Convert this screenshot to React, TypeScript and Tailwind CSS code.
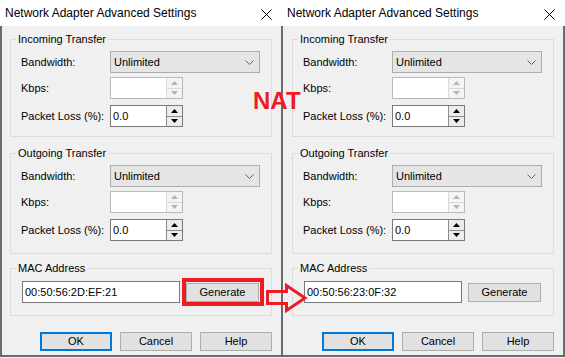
import React from 'react';

const red = '#ed1c24';

function CloseIcon() {
  return (
    <svg width="11" height="11" viewBox="0 0 11 11" className="mt-[2px]">
      <path d="M0.5 0.5 L10.5 10.5 M10.5 0.5 L0.5 10.5" stroke="#000" strokeWidth="1" fill="none" />
    </svg>
  );
}

function Chevron() {
  return (
    <svg width="9" height="5" viewBox="0 0 9 5">
      <polyline points="0.5,0.5 4.5,4.5 8.5,0.5" stroke="#606060" strokeWidth="1" fill="none" />
    </svg>
  );
}

function Triangle({ up, disabled }: { up: boolean; disabled: boolean }) {
  return (
    <svg width="7" height="4" viewBox="0 0 7 4">
      <polygon points={up ? '0,4 3.5,0 7,4' : '0,0 3.5,4 7,0'} fill={disabled ? '#b4b4b4' : '#000'} />
    </svg>
  );
}

function ComboBox() {
  return (
    <div className="flex h-[22px] w-[150px] items-center justify-between border border-[#adadad] bg-[#e5e5e5] pl-[3px] pr-[5px]">
      <span>Unlimited</span>
      <Chevron />
    </div>
  );
}

function SpinBox({ value, disabled }: { value: string; disabled?: boolean }) {
  return (
    <div
      className={`flex h-[22px] w-[73px] bg-white ${disabled ? 'border border-[#b9b9b9]' : 'border border-[#7a7a7a]'}`}
    >
      <div className="flex flex-1 items-center pl-[2px]">{value}</div>
      <div
        className={`flex w-[16px] flex-col border-l ${disabled ? 'border-[#d9d9d9] bg-[#f4f4f4]' : 'border-[#8c8c8c] bg-[#ececec]'}`}
      >
        <div className="flex flex-1 items-center justify-center">
          <Triangle up disabled={!!disabled} />
        </div>
        <div
          className={`flex flex-1 items-center justify-center border-t ${disabled ? 'border-[#d9d9d9]' : 'border-[#8c8c8c]'}`}
        >
          <Triangle up={false} disabled={!!disabled} />
        </div>
      </div>
    </div>
  );
}

function Row({ label, children, className = '' }: { label: string; children: React.ReactNode; className?: string }) {
  return (
    <div className={`flex items-center ${className}`}>
      <span className="w-[89px] shrink-0">{label}</span>
      {children}
    </div>
  );
}

function TransferGroup({ title, className }: { title: string; className: string }) {
  return (
    <fieldset className={`border border-[#dcdcdc] px-[5px] ${className}`}>
      <legend className="px-[2px] leading-[16px]">{title}</legend>
      <div className="flex flex-col pl-[5px] pt-[4px]">
        <Row label="Bandwidth:">
          <ComboBox />
        </Row>
        <Row label="Kbps:" className="mt-[4px]">
          <SpinBox value="" disabled />
        </Row>
        <Row label="Packet Loss (%):" className="mt-[6px]">
          <SpinBox value="0.0" />
        </Row>
      </div>
    </fieldset>
  );
}

function Button({ label, primary }: { label: string; primary?: boolean }) {
  return (
    <div
      className={`flex h-[19px] w-[73px] items-center justify-center bg-[#e1e1e1] ${primary ? 'border-2 border-[#0078d7]' : 'border border-[#adadad]'}`}
    >
      {label}
    </div>
  );
}

function Dialog({ mac, side }: { mac: string; side: 'left' | 'right' }) {
  const body =
    side === 'left'
      ? 'border-l-2 border-r border-b-2 pl-[8px] pr-[9px]'
      : 'border-l border-r-2 border-b-2 pl-[9px] pr-[9px]';
  return (
    <div className={`flex h-[357px] flex-col ${side === 'left' ? 'w-[282px]' : 'w-[283px]'}`}>
      <div className="flex h-[26px] shrink-0 items-center justify-between bg-white pl-[5px] pr-[10px] text-[12px]">
        <span>Network Adapter Advanced Settings</span>
        <CloseIcon />
      </div>
      <div className={`flex flex-1 flex-col border-[#6b6b6b] bg-[#f0f0f0] ${body}`}>
        <TransferGroup title="Incoming Transfer" className="mt-[5px] pb-[9px]" />
        <TransferGroup title="Outgoing Transfer" className="mt-[8px] pb-[12px]" />
        <fieldset className="mt-[6px] border border-[#dcdcdc] px-[5px] pb-[12px]">
          <legend className="px-[2px] leading-[16px]">MAC Address</legend>
          <div className="flex items-center pl-[6px] pt-[5px]">
            <div className="flex h-[22px] w-[158px] items-center border border-[#7a7a7a] bg-white pl-[2px]">
              {mac}
            </div>
            <div className="ml-[6px]">
              <Button label="Generate" />
            </div>
          </div>
        </fieldset>
        <div className="mt-[16px] flex gap-[8px] pl-[30px]">
          <Button label="OK" primary />
          <Button label="Cancel" />
          <Button label="Help" />
        </div>
      </div>
    </div>
  );
}

export default function App() {
  return (
    <div className="relative flex h-[358px] w-[565px] bg-[#f0f0f0] font-['Liberation_Sans',Arial,sans-serif] text-[11px] text-black">
      <Dialog mac="00:50:56:2D:EF:21" side="left" />
      <Dialog mac="00:50:56:23:0F:32" side="right" />

      {/* annotations drawn over the screenshot */}
      <div className="absolute left-[253px] top-[89px] text-[24px] font-bold leading-[24px] text-[#ed1c24]">NAT</div>
      <div className="absolute left-[182px] top-[278px] h-[28px] w-[82px] border-4 border-[#ed1c24]" />
      <svg className="absolute left-[262px] top-[280px]" width="48" height="36" viewBox="0 0 48 36">
        <polygon
          points="5.5,11.5 24.5,11.5 24.5,5.5 43,18 24.5,30.5 24.5,23.5 5.5,23.5"
          fill="none"
          stroke={red}
          strokeWidth="3"
        />
      </svg>
    </div>
  );
}
